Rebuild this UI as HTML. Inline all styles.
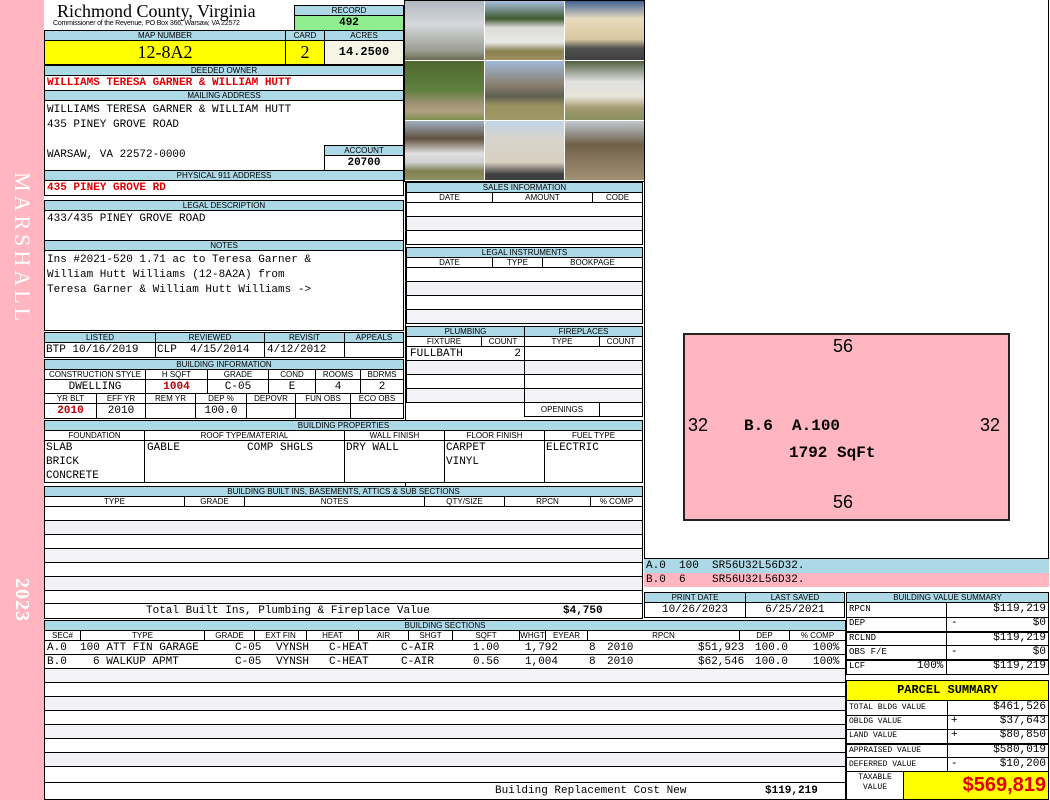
<!DOCTYPE html>
<html><head><meta charset="utf-8"><style>
*{margin:0;padding:0}
body{width:1050px;height:800px;position:relative;background:#fff;overflow:hidden;font-family:"Liberation Mono",monospace}
.a{position:absolute;box-sizing:border-box}
.L{position:absolute;box-sizing:border-box;background:#add8e6;font:8px/9px "Liberation Sans",sans-serif;text-align:center;border:1px solid #000;color:#000;overflow:hidden;white-space:nowrap}
.W{position:absolute;box-sizing:border-box;border:1px solid #000;background:#fff;overflow:hidden;white-space:nowrap}
.m{font-family:"Liberation Mono",monospace;font-size:11px}
.r{color:#e00000;font-weight:bold}
.g{background:#f2f2f7}
.ph{position:absolute;width:79px;height:59px}
</style></head><body>
<!-- sidebar -->
<div class="a" style="left:0;top:0;width:44px;height:800px;background:#ffb6c1"></div>
<div class="a" style="left:9px;top:172px;writing-mode:vertical-rl;color:#fff;font:22px 'Liberation Serif',serif;letter-spacing:4px">MARSHALL</div>
<div class="a" style="left:10px;top:578px;writing-mode:vertical-rl;color:#fff;font:bold 20px 'Liberation Serif',serif;letter-spacing:1px">2023</div>

<!-- header -->
<div class="a" style="left:57px;top:1px;font:18px 'Liberation Serif',serif">Richmond County, Virginia</div>
<div class="a" style="left:53px;top:20px;font:7px 'Liberation Sans',sans-serif;letter-spacing:-0.2px">Commissioner of the Revenue, PO Box 366, Warsaw, VA 22572</div>
<div class="L" style="left:294px;top:5px;width:110px;height:11px">RECORD</div>
<div class="W m" style="left:294px;top:15px;width:110px;height:16px;background:#90ee90;text-align:center;font-weight:bold;line-height:14px">492</div>
<div class="L" style="left:44px;top:30px;width:242px;height:11px">MAP NUMBER</div>
<div class="L" style="left:285px;top:30px;width:40px;height:11px">CARD</div>
<div class="L" style="left:324px;top:30px;width:80px;height:11px">ACRES</div>
<div class="W" style="left:44px;top:40px;width:242px;height:25px;background:#ff0;text-align:center;font:18px/23px 'Liberation Serif',serif">12-8A2</div>
<div class="W" style="left:285px;top:40px;width:40px;height:25px;background:#ff0;text-align:center;font:18px/23px 'Liberation Serif',serif">2</div>
<div class="W m" style="left:324px;top:40px;width:80px;height:25px;background:#f5f5e6;text-align:center;font-weight:bold;font-size:12px;line-height:23px">14.2500</div>
<div class="L" style="left:44px;top:65px;width:360px;height:11px">DEEDED OWNER</div>
<div class="W m r" style="left:44px;top:75px;width:360px;height:16px;padding-left:2px;line-height:15px">WILLIAMS TERESA GARNER &amp; WILLIAM HUTT</div>
<div class="L" style="left:44px;top:90px;width:360px;height:11px">MAILING ADDRESS</div>
<div class="W m" style="left:44px;top:100px;width:360px;height:71px;padding:2px 2px;line-height:15px">WILLIAMS TERESA GARNER &amp; WILLIAM HUTT<br>435 PINEY GROVE ROAD<br><br>WARSAW, VA 22572-0000</div>
<div class="L" style="left:324px;top:145px;width:80px;height:11px">ACCOUNT</div>
<div class="W m" style="left:324px;top:155px;width:80px;height:16px;text-align:center;font-weight:bold;line-height:14px">20700</div>
<div class="L" style="left:44px;top:170px;width:360px;height:11px">PHYSICAL 911 ADDRESS</div>
<div class="W m r" style="left:44px;top:180px;width:360px;height:16px;padding-left:2px;line-height:15px">435 PINEY GROVE RD</div>
<div class="L" style="left:44px;top:200px;width:360px;height:11px">LEGAL DESCRIPTION</div>
<div class="W m" style="left:44px;top:210px;width:360px;height:31px;padding-left:2px;line-height:16px">433/435 PINEY GROVE ROAD</div>
<div class="L" style="left:44px;top:240px;width:360px;height:11px">NOTES</div>
<div class="W m" style="left:44px;top:250px;width:360px;height:81px;padding:2px 2px;line-height:15px">Ins #2021-520 1.71 ac to Teresa Garner &amp;<br>William Hutt Williams (12-8A2A) from<br>Teresa Garner &amp; William Hutt Williams -&gt;</div>

<!-- photos -->
<div class="a" style="left:404px;top:0;width:241px;height:182px;background:#fff;border:1px solid #000"></div>
<div class="ph" style="left:405px;top:1px;background:linear-gradient(#b0b8c0,#d6d8dc 40%,#9a9c90 85%,#6b6b50)"></div>
<div class="ph" style="left:485px;top:1px;background:linear-gradient(#a8c0e0,#405a30 30%,#dcdcd8 45%,#e8e8e8 70%,#8a8050 85%,#a09060)"></div>
<div class="ph" style="left:565px;top:1px;background:linear-gradient(#406090,#e8dcc0 30%,#d8c8a0 65%,#505050 80%,#404040)"></div>
<div class="ph" style="left:405px;top:61px;background:linear-gradient(#506830,#608040 50%,#9a9070 70%,#b0a080 85%,#809050)"></div>
<div class="ph" style="left:485px;top:61px;background:linear-gradient(#a0b8d8,#8a8070 40%,#606050 60%,#9a9060 75%,#a09868)"></div>
<div class="ph" style="left:565px;top:61px;background:linear-gradient(#506040,#e0e0e0 35%,#e8e4d8 60%,#a09870 80%,#8a9060)"></div>
<div class="ph" style="left:405px;top:121px;background:linear-gradient(#a0b0c0,#605040 30%,#e0e0e0 55%,#d0d0d0 70%,#808050 85%,#909060)"></div>
<div class="ph" style="left:485px;top:121px;background:linear-gradient(#c0d4e8,#d8d4cc 30%,#d8d0c0 70%,#404040 90%)"></div>
<div class="ph" style="left:565px;top:121px;background:linear-gradient(#c0c8d0,#706048 40%,#8a7860 70%,#a09070)"></div>

<!-- sales -->
<div class="a" style="left:405px;top:181px;width:239px;height:440px;border-left:1px solid #000"></div>
<div class="L" style="left:406px;top:182px;width:237px;height:11px">SALES INFORMATION</div>
<div class="W" style="left:406px;top:192px;width:87px;height:11px;font:8px/9px 'Liberation Sans';text-align:center">DATE</div>
<div class="W" style="left:492px;top:192px;width:101px;height:11px;font:8px/9px 'Liberation Sans';text-align:center">AMOUNT</div>
<div class="W" style="left:592px;top:192px;width:51px;height:11px;font:8px/9px 'Liberation Sans';text-align:center">CODE</div>
<div class="W" style="left:406px;top:202px;width:237px;height:15px"></div>
<div class="W g" style="left:406px;top:216px;width:237px;height:15px"></div>
<div class="W" style="left:406px;top:230px;width:237px;height:15px"></div>
<div class="L" style="left:406px;top:247px;width:237px;height:11px">LEGAL INSTRUMENTS</div>
<div class="W" style="left:406px;top:257px;width:87px;height:11px;font:8px/9px 'Liberation Sans';text-align:center">DATE</div>
<div class="W" style="left:492px;top:257px;width:51px;height:11px;font:8px/9px 'Liberation Sans';text-align:center">TYPE</div>
<div class="W" style="left:542px;top:257px;width:101px;height:11px;font:8px/9px 'Liberation Sans';text-align:center">BOOKPAGE</div>
<div class="W" style="left:406px;top:267px;width:237px;height:15px"></div>
<div class="W g" style="left:406px;top:281px;width:237px;height:15px"></div>
<div class="W" style="left:406px;top:295px;width:237px;height:15px"></div>
<div class="W g" style="left:406px;top:309px;width:237px;height:15px"></div>
<div class="L" style="left:406px;top:326px;width:119px;height:11px">PLUMBING</div>
<div class="L" style="left:524px;top:326px;width:119px;height:11px">FIREPLACES</div>
<div class="W" style="left:406px;top:336px;width:76px;height:11px;font:8px/9px 'Liberation Sans';text-align:center">FIXTURE</div>
<div class="W" style="left:481px;top:336px;width:44px;height:11px;font:8px/9px 'Liberation Sans';text-align:center">COUNT</div>
<div class="W" style="left:524px;top:336px;width:76px;height:11px;font:8px/9px 'Liberation Sans';text-align:center">TYPE</div>
<div class="W" style="left:599px;top:336px;width:44px;height:11px;font:8px/9px 'Liberation Sans';text-align:center">COUNT</div>
<div class="W m" style="left:406px;top:346px;width:119px;height:15px;line-height:14px;padding:0 3px">FULLBATH<span style="float:right">2</span></div>
<div class="W g" style="left:406px;top:360px;width:119px;height:15px"></div>
<div class="W" style="left:406px;top:374px;width:119px;height:15px"></div>
<div class="W g" style="left:406px;top:388px;width:119px;height:15px"></div>
<div class="W" style="left:524px;top:346px;width:119px;height:15px"></div>
<div class="W g" style="left:524px;top:360px;width:119px;height:15px"></div>
<div class="W" style="left:524px;top:374px;width:119px;height:15px"></div>
<div class="W g" style="left:524px;top:388px;width:119px;height:15px"></div>
<div class="W" style="left:524px;top:402px;width:76px;height:15px;font:8px/13px 'Liberation Sans';text-align:center">OPENINGS</div>
<div class="W" style="left:599px;top:402px;width:44px;height:15px"></div>

<!-- listed -->
<div class="L" style="left:44px;top:332px;width:112px;height:11px">LISTED</div>
<div class="L" style="left:155px;top:332px;width:110px;height:11px">REVIEWED</div>
<div class="L" style="left:264px;top:332px;width:81px;height:11px">REVISIT</div>
<div class="L" style="left:344px;top:332px;width:60px;height:11px">APPEALS</div>
<div class="W m" style="left:44px;top:342px;width:112px;height:16px;line-height:14px;padding-left:1px">BTP 10/16/2019</div>
<div class="W m" style="left:155px;top:342px;width:110px;height:16px;line-height:14px;padding-left:1px">CLP&nbsp;&nbsp;4/15/2014</div>
<div class="W m" style="left:264px;top:342px;width:81px;height:16px;line-height:14px;padding-left:2px">4/12/2012</div>
<div class="W m" style="left:344px;top:342px;width:60px;height:16px"></div>

<!-- building info -->
<div class="L" style="left:44px;top:359px;width:360px;height:11px">BUILDING INFORMATION</div>
<div class="W" style="left:44px;top:369px;width:102px;height:11px;font:8px/9px 'Liberation Sans';text-align:center">CONSTRUCTION STYLE</div>
<div class="W" style="left:145px;top:369px;width:63px;height:11px;font:8px/9px 'Liberation Sans';text-align:center">H SQFT</div>
<div class="W" style="left:207px;top:369px;width:62px;height:11px;font:8px/9px 'Liberation Sans';text-align:center">GRADE</div>
<div class="W" style="left:268px;top:369px;width:48px;height:11px;font:8px/9px 'Liberation Sans';text-align:center">COND</div>
<div class="W" style="left:315px;top:369px;width:46px;height:11px;font:8px/9px 'Liberation Sans';text-align:center">ROOMS</div>
<div class="W" style="left:360px;top:369px;width:44px;height:11px;font:8px/9px 'Liberation Sans';text-align:center">BDRMS</div>
<div class="W m" style="left:44px;top:379px;width:102px;height:15px;text-align:center;line-height:14px">DWELLING</div>
<div class="W m" style="left:145px;top:379px;width:63px;height:15px;text-align:center;line-height:14px;color:#c00000;font-weight:bold">1004</div>
<div class="W m" style="left:207px;top:379px;width:62px;height:15px;text-align:center;line-height:14px">C-05</div>
<div class="W m" style="left:268px;top:379px;width:48px;height:15px;text-align:center;line-height:14px">E</div>
<div class="W m" style="left:315px;top:379px;width:46px;height:15px;text-align:center;line-height:14px">4</div>
<div class="W m" style="left:360px;top:379px;width:44px;height:15px;text-align:center;line-height:14px">2</div>
<div class="W" style="left:44px;top:393px;width:53px;height:11px;font:8px/9px 'Liberation Sans';text-align:center">YR BLT</div>
<div class="W" style="left:96px;top:393px;width:50px;height:11px;font:8px/9px 'Liberation Sans';text-align:center">EFF YR</div>
<div class="W" style="left:145px;top:393px;width:51px;height:11px;font:8px/9px 'Liberation Sans';text-align:center">REM YR</div>
<div class="W" style="left:195px;top:393px;width:52px;height:11px;font:8px/9px 'Liberation Sans';text-align:center">DEP %</div>
<div class="W" style="left:246px;top:393px;width:50px;height:11px;font:8px/9px 'Liberation Sans';text-align:center">DEPOVR</div>
<div class="W" style="left:295px;top:393px;width:56px;height:11px;font:8px/9px 'Liberation Sans';text-align:center">FUN OBS</div>
<div class="W" style="left:350px;top:393px;width:54px;height:11px;font:8px/9px 'Liberation Sans';text-align:center">ECO OBS</div>
<div class="W m" style="left:44px;top:403px;width:53px;height:16px;text-align:center;line-height:14px;color:#c00000;font-weight:bold">2010</div>
<div class="W m" style="left:96px;top:403px;width:50px;height:16px;text-align:center;line-height:14px">2010</div>
<div class="W" style="left:145px;top:403px;width:51px;height:16px"></div>
<div class="W m" style="left:195px;top:403px;width:52px;height:16px;text-align:center;line-height:14px">100.0</div>
<div class="W" style="left:246px;top:403px;width:50px;height:16px"></div>
<div class="W" style="left:295px;top:403px;width:56px;height:16px"></div>
<div class="W" style="left:350px;top:403px;width:54px;height:16px"></div>

<!-- building properties -->
<div class="L" style="left:44px;top:420px;width:599px;height:11px">BUILDING PROPERTIES</div>
<div class="W" style="left:44px;top:430px;width:101px;height:11px;font:8px/9px 'Liberation Sans';text-align:center">FOUNDATION</div>
<div class="W" style="left:144px;top:430px;width:201px;height:11px;font:8px/9px 'Liberation Sans';text-align:center">ROOF TYPE/MATERIAL</div>
<div class="W" style="left:344px;top:430px;width:101px;height:11px;font:8px/9px 'Liberation Sans';text-align:center">WALL FINISH</div>
<div class="W" style="left:444px;top:430px;width:101px;height:11px;font:8px/9px 'Liberation Sans';text-align:center">FLOOR FINISH</div>
<div class="W" style="left:544px;top:430px;width:99px;height:11px;font:8px/9px 'Liberation Sans';text-align:center">FUEL TYPE</div>
<div class="W m" style="left:44px;top:440px;width:101px;height:43px;line-height:14px;padding-left:1px">SLAB<br>BRICK<br>CONCRETE</div>
<div class="W m" style="left:144px;top:440px;width:201px;height:43px;line-height:14px;padding-left:2px">GABLE<span style="position:absolute;left:102px">COMP SHGLS</span></div>
<div class="W m" style="left:344px;top:440px;width:101px;height:43px;line-height:14px;padding-left:1px">DRY WALL</div>
<div class="W m" style="left:444px;top:440px;width:101px;height:43px;line-height:14px;padding-left:1px">CARPET<br>VINYL</div>
<div class="W m" style="left:544px;top:440px;width:99px;height:43px;line-height:14px;padding-left:1px">ELECTRIC</div>

<!-- built ins -->
<div class="L" style="left:44px;top:486px;width:599px;height:11px">BUILDING BUILT INS, BASEMENTS, ATTICS &amp; SUB SECTIONS</div>
<div class="W" style="left:44px;top:496px;width:141px;height:11px;font:8px/9px 'Liberation Sans';text-align:center">TYPE</div>
<div class="W" style="left:184px;top:496px;width:61px;height:11px;font:8px/9px 'Liberation Sans';text-align:center">GRADE</div>
<div class="W" style="left:244px;top:496px;width:181px;height:11px;font:8px/9px 'Liberation Sans';text-align:center">NOTES</div>
<div class="W" style="left:424px;top:496px;width:81px;height:11px;font:8px/9px 'Liberation Sans';text-align:center">QTY/SIZE</div>
<div class="W" style="left:504px;top:496px;width:87px;height:11px;font:8px/9px 'Liberation Sans';text-align:center">RPCN</div>
<div class="W" style="left:590px;top:496px;width:53px;height:11px;font:8px/9px 'Liberation Sans';text-align:center">% COMP</div>
<div class="W" style="left:44px;top:506px;width:599px;height:15px"></div>
<div class="W g" style="left:44px;top:520px;width:599px;height:15px"></div>
<div class="W" style="left:44px;top:534px;width:599px;height:15px"></div>
<div class="W g" style="left:44px;top:548px;width:599px;height:15px"></div>
<div class="W" style="left:44px;top:562px;width:599px;height:15px"></div>
<div class="W g" style="left:44px;top:576px;width:599px;height:15px"></div>
<div class="W" style="left:44px;top:590px;width:599px;height:14px"></div>
<div class="W m" style="left:44px;top:603px;width:599px;height:16px;line-height:15px"><span style="position:absolute;left:101px">Total Built Ins, Plumbing &amp; Fireplace Value</span><span style="position:absolute;left:518px;font-weight:bold">$4,750</span></div>

<!-- sketch -->
<div class="a" style="left:644px;top:0;width:405px;height:559px;border:1px solid #000;border-top:none"></div>
<div class="a" style="left:683px;top:333px;width:327px;height:188px;background:#ffb6c1;border:2px solid #222"></div>
<div class="a" style="left:833px;top:336px;font:18px 'Liberation Sans',sans-serif">56</div>
<div class="a" style="left:833px;top:492px;font:18px 'Liberation Sans',sans-serif">56</div>
<div class="a" style="left:688px;top:415px;font:18px 'Liberation Sans',sans-serif">32</div>
<div class="a" style="left:980px;top:415px;font:18px 'Liberation Sans',sans-serif">32</div>
<div class="a" style="left:744px;top:417px;font:bold 16px 'Liberation Mono',monospace">B.6&nbsp;&nbsp;A.100</div>
<div class="a" style="left:789px;top:444px;font:bold 16px 'Liberation Mono',monospace">1792 SqFt</div>
<div class="a m" style="left:644px;top:559px;width:405px;height:14px;background:#add8e6;padding-left:2px;line-height:14px">A.0&nbsp;&nbsp;100&nbsp;&nbsp;SR56U32L56D32.</div>
<div class="a m" style="left:644px;top:573px;width:405px;height:14px;background:#ffb6c1;padding-left:2px;line-height:14px">B.0&nbsp;&nbsp;6&nbsp;&nbsp;&nbsp;&nbsp;SR56U32L56D32.</div>

<!-- print date -->
<div class="L" style="left:644px;top:592px;width:102px;height:11px">PRINT DATE</div>
<div class="L" style="left:745px;top:592px;width:100px;height:11px">LAST SAVED</div>
<div class="W m" style="left:644px;top:602px;width:102px;height:16px;text-align:center;line-height:14px">10/26/2023</div>
<div class="W m" style="left:745px;top:602px;width:100px;height:16px;text-align:center;line-height:14px">6/25/2021</div>

<!-- building sections -->
<div class="L" style="left:44px;top:620px;width:802px;height:11px">BUILDING SECTIONS</div>
<div class="a" style="left:44px;top:630px;width:802px;height:11px;border:1px solid #000;font:8px/9px 'Liberation Sans',sans-serif">
<span class="a" style="left:0;width:36px;text-align:center;border-right:1px solid #000;height:9px">SEC#</span>
<span class="a" style="left:36px;width:124px;text-align:center;border-right:1px solid #000;height:9px">TYPE</span>
<span class="a" style="left:160px;width:50px;text-align:center;border-right:1px solid #000;height:9px">GRADE</span>
<span class="a" style="left:210px;width:52px;text-align:center;border-right:1px solid #000;height:9px">EXT FIN</span>
<span class="a" style="left:262px;width:52px;text-align:center;border-right:1px solid #000;height:9px">HEAT</span>
<span class="a" style="left:314px;width:50px;text-align:center;border-right:1px solid #000;height:9px">AIR</span>
<span class="a" style="left:364px;width:44px;text-align:center;border-right:1px solid #000;height:9px">SHGT</span>
<span class="a" style="left:408px;width:67px;text-align:center;border-right:1px solid #000;height:9px">SQFT</span>
<span class="a" style="left:475px;width:26px;text-align:center;border-right:1px solid #000;height:9px">WHGT</span>
<span class="a" style="left:501px;width:42px;text-align:center;border-right:1px solid #000;height:9px">EYEAR</span>
<span class="a" style="left:543px;width:152px;text-align:center;border-right:1px solid #000;height:9px">RPCN</span>
<span class="a" style="left:695px;width:50px;text-align:center;border-right:1px solid #000;height:9px">DEP</span>
<span class="a" style="left:745px;width:55px;text-align:center;height:9px">% COMP</span>
</div>
<div class="W m" style="left:44px;top:640px;width:802px;height:15px;line-height:14px"><span class="a" style="left:2px">A.0</span><span class="a" style="left:35px">100 ATT FIN GARAGE</span><span class="a" style="left:190px">C-05</span><span class="a" style="left:231px">VYNSH</span><span class="a" style="left:284px">C-HEAT</span><span class="a" style="left:356px">C-AIR</span><span class="a" style="left:428px">1.00</span><span class="a" style="left:480px">1,792</span><span class="a" style="left:544px">8</span><span class="a" style="left:562px">2010</span><span class="a" style="left:653px">$51,923</span><span class="a" style="left:710px">100.0</span><span class="a" style="left:768px">100%</span></div>
<div class="W m" style="left:44px;top:654px;width:802px;height:15px;line-height:14px"><span class="a" style="left:2px">B.0</span><span class="a" style="left:48px">6 WALKUP APMT</span><span class="a" style="left:190px">C-05</span><span class="a" style="left:231px">VYNSH</span><span class="a" style="left:284px">C-HEAT</span><span class="a" style="left:356px">C-AIR</span><span class="a" style="left:428px">0.56</span><span class="a" style="left:480px">1,004</span><span class="a" style="left:544px">8</span><span class="a" style="left:562px">2010</span><span class="a" style="left:653px">$62,546</span><span class="a" style="left:710px">100.0</span><span class="a" style="left:768px">100%</span></div>
<div class="W g" style="left:44px;top:668px;width:802px;height:15px"></div>
<div class="W" style="left:44px;top:682px;width:802px;height:15px"></div>
<div class="W g" style="left:44px;top:696px;width:802px;height:15px"></div>
<div class="W" style="left:44px;top:710px;width:802px;height:15px"></div>
<div class="W g" style="left:44px;top:724px;width:802px;height:15px"></div>
<div class="W" style="left:44px;top:738px;width:802px;height:15px"></div>
<div class="W g" style="left:44px;top:752px;width:802px;height:15px"></div>
<div class="W" style="left:44px;top:766px;width:802px;height:17px"></div>
<div class="W m" style="left:44px;top:782px;width:802px;height:18px;line-height:16px"><span class="a" style="left:450px">Building Replacement Cost New</span><span class="a" style="left:720px;font-weight:bold">$119,219</span></div>

<!-- building value summary -->
<div class="L" style="left:846px;top:592px;width:203px;height:11px">BUILDING VALUE SUMMARY</div>
<div class="a" style="left:846px;top:602px;width:203px;height:73px;border:1px solid #000;font-size:10px">
<div class="a" style="left:0;top:0;width:100px;height:71px;border-right:1px solid #000"></div>
<div class="a" style="left:0;top:14px;width:201px;border-top:1px solid #000"></div>
<div class="a" style="left:0;top:28px;width:201px;border-top:2px solid #000"></div>
<div class="a" style="left:0;top:42px;width:201px;border-top:1px solid #000"></div>
<div class="a" style="left:0;top:56px;width:201px;border-top:2px solid #000"></div>
<span class="a" style="left:2px;top:1px;font:9px 'Liberation Mono'">RPCN</span>
<span class="a" style="left:2px;top:15px;font:9px 'Liberation Mono'">DEP</span>
<span class="a" style="left:2px;top:30px;font:9px 'Liberation Mono'">RCLND</span>
<span class="a" style="left:2px;top:44px;font:9px 'Liberation Mono'">OBS F/E</span>
<span class="a" style="left:2px;top:58px;font:9px 'Liberation Mono'">LCF</span>
<span class="a m" style="left:70px;top:57px">100%</span>
<span class="a m" style="right:2px;top:0">$119,219</span>
<span class="a m" style="left:104px;top:14px">-</span><span class="a m" style="right:2px;top:14px">$0</span>
<span class="a m" style="right:2px;top:29px">$119,219</span>
<span class="a m" style="left:104px;top:43px">-</span><span class="a m" style="right:2px;top:43px">$0</span>
<span class="a m" style="right:2px;top:57px">$119,219</span>
</div>

<!-- parcel summary -->
<div class="W" style="left:846px;top:680px;width:203px;height:21px;background:#ff0;text-align:center;font:bold 12px/19px 'Liberation Mono',monospace">PARCEL SUMMARY</div>
<div class="a" style="left:846px;top:700px;width:203px;height:100px;border:1px solid #000">
<div class="a" style="left:0;top:0;width:101px;height:71px;border-right:1px solid #000"></div>
<div class="a" style="left:0;top:14px;width:201px;border-top:1px solid #000"></div>
<div class="a" style="left:0;top:28px;width:201px;border-top:1px solid #000"></div>
<div class="a" style="left:0;top:42px;width:201px;border-top:2px solid #000"></div>
<div class="a" style="left:0;top:56px;width:201px;border-top:1px solid #000"></div>
<div class="a" style="left:0;top:70px;width:201px;border-top:1px solid #000"></div>
<span class="a" style="left:2px;top:2px;font:8px 'Liberation Mono'">TOTAL BLDG VALUE</span>
<span class="a" style="left:2px;top:16px;font:8px 'Liberation Mono'">OBLDG VALUE</span>
<span class="a" style="left:2px;top:30px;font:8px 'Liberation Mono'">LAND VALUE</span>
<span class="a" style="left:2px;top:45px;font:8px 'Liberation Mono'">APPRAISED VALUE</span>
<span class="a" style="left:2px;top:59px;font:8px 'Liberation Mono'">DEFERRED VALUE</span>
<span class="a m" style="right:2px;top:0">$461,526</span>
<span class="a m" style="left:104px;top:14px">+</span><span class="a m" style="right:2px;top:14px">$37,643</span>
<span class="a m" style="left:104px;top:28px">+</span><span class="a m" style="right:2px;top:28px">$80,850</span>
<span class="a m" style="right:2px;top:43px">$580,019</span>
<span class="a m" style="left:104px;top:57px">-</span><span class="a m" style="right:2px;top:57px">$10,200</span>
<span class="a" style="left:0;top:72px;width:56px;text-align:center;font:8px/10px 'Liberation Mono'">TAXABLE<br>VALUE</span>
<div class="a" style="left:56px;top:71px;width:145px;height:27px;background:#ff0;border-left:1px solid #000;text-align:right;color:#e00000;font:bold 20px/26px 'Liberation Sans',sans-serif;padding-right:2px">$569,819</div>
</div>
</body></html>
